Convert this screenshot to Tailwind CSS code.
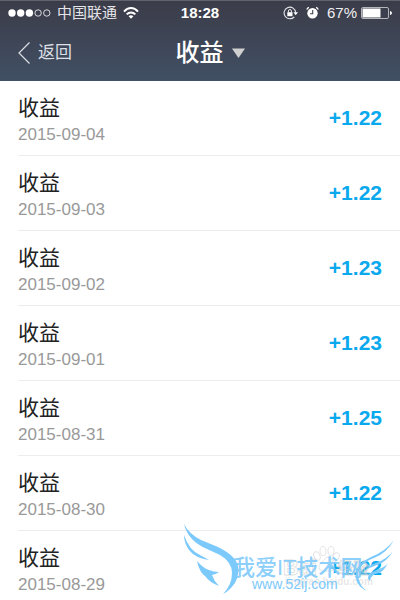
<!DOCTYPE html>
<html lang="zh-CN">
<head>
<meta charset="utf-8">
<meta name="viewport" content="width=device-width, initial-scale=1">
<title>收益</title>
<script src="https://cdn.jsdelivr.net/npm/@tailwindcss/browser@4"></script>
</head>
<body class="bg-white font-['Liberation_Sans','Noto_Sans_CJK_SC',sans-serif]">
<div class="relative overflow-hidden">
  <header class="border-t border-[#62626c] bg-linear-to-b from-[#3b3c49] to-[#415064] text-white">
    <div class="grid h-6 grid-cols-[1fr_auto_1fr] items-center px-2 text-[15px] leading-6">
      <div class="flex items-center gap-1.5">
        <svg class="h-2 w-[43px]" viewBox="0 0 43 8" fill="#fff" aria-hidden="true">
          <circle cx="4" cy="4" r="3.7"/><circle cx="12.7" cy="4" r="3.7"/><circle cx="21.4" cy="4" r="3.7"/>
          <g fill="none" stroke="#fff" stroke-width=".8"><circle cx="30.1" cy="4" r="3.2"/><circle cx="38.8" cy="4" r="3.2"/></g>
        </svg>
        <span class="text-[#e4e4e8]">中国联通</span>
        <svg class="h-3 w-4" viewBox="0 0 16 12" fill="none" stroke="#fff" stroke-width="2" aria-hidden="true">
          <path d="M1 4.6C5-.1 11-.1 15 4.6M3.7 7.4c2.5-2.7 6.1-2.7 8.6 0"/><path d="M5.6 9.2Q8 7.2 10.4 9.2L8 11.8Z" fill="#fff" stroke="none"/>
        </svg>
      </div>
      <time class="font-bold">18:28</time>
      <div class="flex items-center justify-end">
        <svg class="mr-2 h-[14px] w-[15px]" viewBox="0 0 15 14" fill="none" stroke="#e8e8ec" aria-hidden="true">
          <path d="M11.3 10.8A5.8 5.8 0 1 1 12.7 6.5" stroke-width="1.1"/><path d="M10.4 6.300h4.600l-2.300 2.900Z" fill="#fff" stroke="none"/><path d="M4.300 6.200h5.200v4H4.300Z" fill="#fff" stroke="none"/><path d="M5.400 6.500V5a1.500 1.500 0 0 1 3 0v1.500"/>
        </svg>
        <svg class="mr-2 h-[14px] w-[13px]" viewBox="0 0 13 14" aria-hidden="true">
          <circle cx="6.5" cy="7.3" r="5.2" fill="#fff"/><path d="M6.700 4v3.700H4" fill="none" stroke="#41424f" stroke-width="1.1"/><path d="M.8 3.700Q1.200 1.800 3 1.300M12.200 3.700Q11.800 1.800 10 1.300" fill="none" stroke="#fff" stroke-width="1.2"/>
        </svg>
        <span class="mr-1 text-[#f0f0f2]">67%</span>
        <svg class="h-3 w-[31px]" viewBox="0 0 31 12" aria-hidden="true">
          <rect x=".5" y=".5" width="27" height="11" rx="1.500" fill="none" stroke="#b5b6bc"/><path d="M1.500 1.500h18v9h-18Z" fill="#fff"/><path d="M29 4q2 .3 2 2t-2 2Z" fill="#fff"/>
        </svg>
      </div>
    </div>
    <nav class="grid h-14 grid-cols-[1fr_auto_1fr] items-center px-[18px]">
      <a href="#" class="flex items-center gap-2 text-[17px] text-[#dcdfe4]">
        <svg class="h-6 w-3" viewBox="0 0 12 24" fill="none" stroke="currentColor" stroke-width="1.2" aria-hidden="true"><path d="M11.500 1.500L1 12l10.500 10.500"/></svg>
        返回
      </a>
      <button type="button" class="ml-5 flex items-center gap-2 text-2xl font-medium">
        收益
        <svg class="h-[10px] w-[13px]" viewBox="0 0 13 10" fill="#d0d0d0" aria-hidden="true"><path d="M0 .5h13L6.500 10Z"/></svg>
      </button>
      <span></span>
    </nav>
  </header>
  <main class="pl-[18px]">
    <ul>
      <li class="flex items-start justify-between border-b border-[#ededed] pt-[11px] pb-[9px] pr-[18px]"><div><h2 class="text-[21px] leading-8 text-[#222]">收益</h2><time class="block text-[17px] leading-[22px] text-[#999]">2015-09-04</time></div><span class="pt-2.5 text-[21px] font-bold leading-8 text-[#0aa9ee]">+1.22</span></li>
      <li class="flex items-start justify-between border-b border-[#ededed] pt-[11px] pb-[9px] pr-[18px]"><div><h2 class="text-[21px] leading-8 text-[#222]">收益</h2><time class="block text-[17px] leading-[22px] text-[#999]">2015-09-03</time></div><span class="pt-2.5 text-[21px] font-bold leading-8 text-[#0aa9ee]">+1.22</span></li>
      <li class="flex items-start justify-between border-b border-[#ededed] pt-[11px] pb-[9px] pr-[18px]"><div><h2 class="text-[21px] leading-8 text-[#222]">收益</h2><time class="block text-[17px] leading-[22px] text-[#999]">2015-09-02</time></div><span class="pt-2.5 text-[21px] font-bold leading-8 text-[#0aa9ee]">+1.23</span></li>
      <li class="flex items-start justify-between border-b border-[#ededed] pt-[11px] pb-[9px] pr-[18px]"><div><h2 class="text-[21px] leading-8 text-[#222]">收益</h2><time class="block text-[17px] leading-[22px] text-[#999]">2015-09-01</time></div><span class="pt-2.5 text-[21px] font-bold leading-8 text-[#0aa9ee]">+1.23</span></li>
      <li class="flex items-start justify-between border-b border-[#ededed] pt-[11px] pb-[9px] pr-[18px]"><div><h2 class="text-[21px] leading-8 text-[#222]">收益</h2><time class="block text-[17px] leading-[22px] text-[#999]">2015-08-31</time></div><span class="pt-2.5 text-[21px] font-bold leading-8 text-[#0aa9ee]">+1.25</span></li>
      <li class="flex items-start justify-between border-b border-[#ededed] pt-[11px] pb-[9px] pr-[18px]"><div><h2 class="text-[21px] leading-8 text-[#222]">收益</h2><time class="block text-[17px] leading-[22px] text-[#999]">2015-08-30</time></div><span class="pt-2.5 text-[21px] font-bold leading-8 text-[#0aa9ee]">+1.22</span></li>
      <li class="flex items-start justify-between pt-[11px] pb-1 pr-[18px]"><div><h2 class="text-[21px] leading-8 text-[#222]">收益</h2><time class="block text-[17px] leading-[22px] text-[#999]">2015-08-29</time></div><span class="pt-2.5 text-[21px] font-bold leading-8 text-[#0aa9ee]">+1.22</span></li>
    </ul>
  </main>
  <svg class="pointer-events-none absolute right-0 bottom-0 h-20 w-[220px]" viewBox="0 0 220 80" role="img" aria-label="我爱IT技术网 www.52ij.com">
    <g fill="#fff" fill-opacity=".4" stroke="#c8c8c8" stroke-opacity=".6" stroke-width=".8">
      <ellipse cx="137" cy="36" rx="3" ry="4.5" transform="rotate(-20 137 36)"/><ellipse cx="143" cy="31" rx="3" ry="4.5"/><ellipse cx="151" cy="31" rx="3" ry="4.5"/><ellipse cx="156" cy="37" rx="3" ry="4.5" transform="rotate(20 156 37)"/>
      <path d="M147 37q4 0 6 5t1 7q-3 3-7 2-5 1-8-2-1-3 2-6t6-6Z"/>
      <text x="103" y="55" font-size="22" font-weight="700">Bai</text><text x="157" y="54" font-size="16">经验</text>
    </g>
    <text x="105" y="65" font-size="10" font-weight="700" fill="#ccc" fill-opacity=".45">jingyan.baidu.com</text>
    <g fill="#7cc9fb">
      <path d="M4 4Q9 14 21 20L38 27Q56 36 58 46Q60 59 51 68Q47 72 43 74Q52 65 52 53Q52 42 40 35L27 29Q8 21 4 4Z"/>
      <path d="M4 15Q9 30 20 35L29 40Q15 38 9 30Q4 23 4 15Z"/>
      <path d="M17 41Q23 48 29 50Q34 52 39 52Q35 55 32 55Q34 61 39 66Q29 62 26 57Q19 52 17 41Z"/>
      <path d="M214 20Q207 33 194 38Q178 44 178 55Q179 66 187 71Q174 65 176 52Q178 43 191 37Q206 31 214 20Z"/>
      <path d="M213 31Q207 42 197 45L187 49Q189 45 196 43Q207 39 213 31Z"/>
      <path d="M208 43Q204 51 199 53L195 54Q190 57 190 61Q186 58 190 53L199 49Q205 47 208 43Z"/>
      <text x="53" y="55" font-size="22" font-weight="500" fill-opacity=".9">我爱IT技术网</text>
      <text x="72" y="69" font-size="14">www.52ij.com</text>
    </g>
  </svg>
</div>
</body>
</html>
